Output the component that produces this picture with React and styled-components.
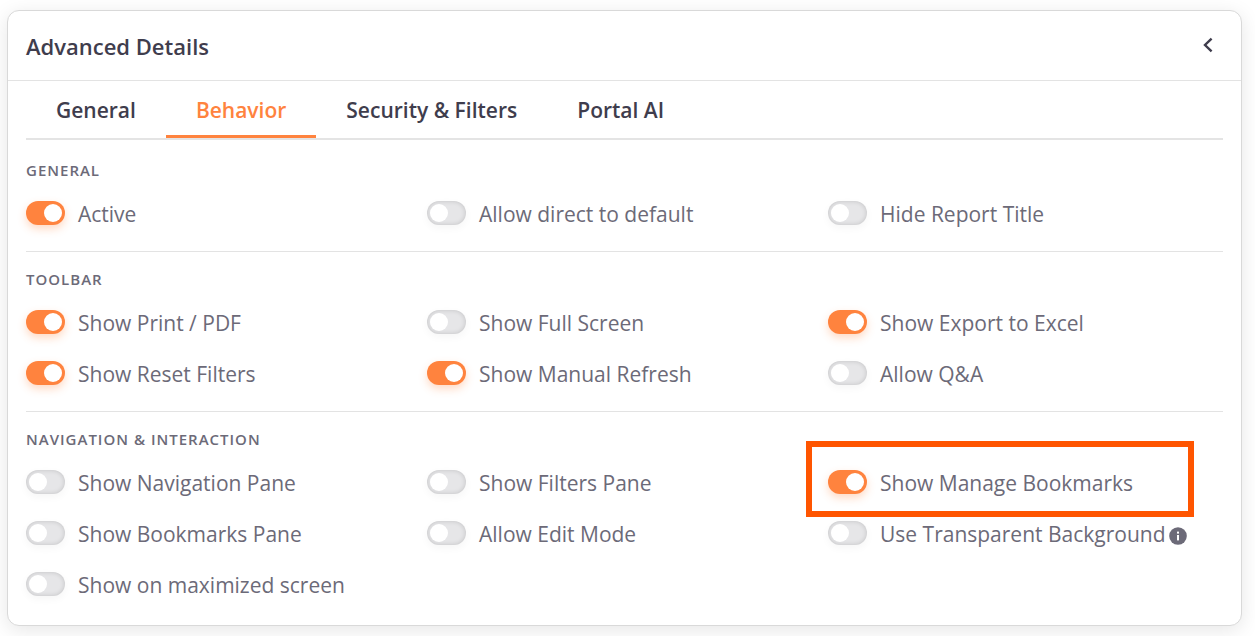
import React, { useState } from "react";
import styled, { createGlobalStyle } from "styled-components";

const GlobalStyle = createGlobalStyle`
  *, *::before, *::after { box-sizing: border-box; }
  body {
    margin: 0;
    background: #fff;
    color: #3f3d4d;
    font-family: "Open Sans", "Noto Sans", sans-serif;
    font-size: 21px;
  }
`;

const Page = styled.main`
  padding: 10px 13px 10px 7px;
`;

const Card = styled.section`
  background: #fff;
  border: 1px solid #d9d9d9;
  border-radius: 12px;
  box-shadow: 0 4px 20px rgba(0, 0, 0, 0.1);
`;

const CardHeader = styled.header`
  display: flex;
  align-items: center;
  justify-content: space-between;
  height: 70px;
  padding: 0 18px;
  border-bottom: 1px solid #e3e3e3;
`;

const Title = styled.h2`
  margin: 0;
  font-size: 22px;
  font-weight: 600;
  line-height: 32px;
`;

const CollapseButton = styled.button`
  display: flex;
  align-items: center;
  justify-content: center;
  width: 30px;
  height: 32px;
  padding: 0 0 2px;
  border: 0;
  background: none;
  color: #3f3d4d;
  cursor: pointer;
`;

const CardBody = styled.div`
  padding: 0 18px 15px;
`;

const TabList = styled.div`
  display: flex;
  border-bottom: 2px solid #e4e4e4;
`;

const Tab = styled.button`
  height: 57px;
  padding: 4px 30px 0;
  border: 0;
  border-bottom: 3px solid ${(p) => (p.$active ? "#ff833e" : "transparent")};
  background: none;
  color: ${(p) => (p.$active ? "#ff833e" : "#3f3d4d")};
  font-family: inherit;
  font-size: 21px;
  font-weight: 600;
  white-space: nowrap;
  cursor: pointer;
`;

const Group = styled.section`
  padding: 17px 0 12px;
  border-top: 1px solid #e3e3e3;

  &:first-of-type {
    padding-top: 20px;
    border-top: 0;
  }

  &:last-of-type {
    padding-bottom: 0;
  }
`;

const GroupTitle = styled.h3`
  margin: 0 0 8px;
  color: #6c6a78;
  font-size: 15px;
  font-weight: 600;
  line-height: 20px;
  letter-spacing: 1px;
  text-transform: uppercase;
`;

const OptionGrid = styled.div`
  display: grid;
  grid-template-columns: repeat(3, minmax(0, 1fr));
  column-gap: 6px;
`;

const Option = styled.div`
  position: relative;
  display: flex;
  align-items: center;
  height: 51px;
`;

const OptionLabel = styled.label`
  display: flex;
  align-items: center;
  gap: 13px;
  color: #6c6a78;
  line-height: 30px;
  white-space: nowrap;
  cursor: pointer;
`;

const Switch = styled.input`
  appearance: none;
  display: flex;
  align-items: center;
  flex: none;
  width: 39px;
  height: 24px;
  margin: 0 0 2px;
  padding: 0 3px;
  border-radius: 12px;
  background: #e6e6e8;
  box-shadow: inset 0 0 5px rgba(0, 0, 0, 0.16), 0 3px 8px rgba(0, 0, 0, 0.04);
  cursor: pointer;

  &::before {
    content: "";
    width: 18px;
    height: 18px;
    border-radius: 50%;
    background: #fff;
  }

  &:checked {
    justify-content: flex-end;
    background: #ff833e;
    box-shadow: 0 4px 8px rgba(255, 131, 62, 0.3);
  }
`;

const InfoButton = styled.button`
  display: flex;
  margin: 4px 0 0 3px;
  padding: 0;
  border: 0;
  background: none;
  cursor: pointer;
`;

const Highlight = styled.div`
  position: absolute;
  inset: -16px 29px -9px -22px;
  border: 6px solid #ff5500;
  pointer-events: none;
`;

const TABS = ["General", "Behavior", "Security & Filters", "Portal AI"];

const GROUPS = [
  {
    title: "General",
    options: [
      { label: "Active", on: true },
      { label: "Allow direct to default" },
      { label: "Hide Report Title" },
    ],
  },
  {
    title: "Toolbar",
    options: [
      { label: "Show Print / PDF", on: true },
      { label: "Show Full Screen" },
      { label: "Show Export to Excel", on: true },
      { label: "Show Reset Filters", on: true },
      { label: "Show Manual Refresh", on: true },
      { label: "Allow Q&A" },
    ],
  },
  {
    title: "Navigation & Interaction",
    options: [
      { label: "Show Navigation Pane" },
      { label: "Show Filters Pane" },
      { label: "Show Manage Bookmarks", on: true, highlight: true },
      { label: "Show Bookmarks Pane" },
      { label: "Allow Edit Mode" },
      { label: "Use Transparent Background", info: true },
      { label: "Show on maximized screen" },
    ],
  },
];

function ChevronIcon() {
  return (
    <svg width="14" height="18" viewBox="0 0 14 18" fill="none" aria-hidden="true">
      <path d="M10.6 2.6 L4 9 L10.6 15.4" stroke="currentColor" strokeWidth="2.4" />
    </svg>
  );
}

function InfoIcon() {
  return (
    <svg width="18" height="18" viewBox="0 0 18 18" aria-hidden="true">
      <circle cx="9" cy="9" r="8.8" fill="#6c6a78" />
      <rect x="8" y="4.6" width="2" height="2" fill="#fff" />
      <rect x="8" y="8" width="2" height="5.4" fill="#fff" />
    </svg>
  );
}

export default function App() {
  const [tab, setTab] = useState("Behavior");

  return (
    <>
      <GlobalStyle />
      <Page>
        <Card>
          <CardHeader>
            <Title>Advanced Details</Title>
            <CollapseButton type="button" aria-label="Collapse">
              <ChevronIcon />
            </CollapseButton>
          </CardHeader>
          <CardBody>
            <TabList role="tablist">
              {TABS.map((name) => (
                <Tab
                  key={name}
                  type="button"
                  role="tab"
                  aria-selected={name === tab}
                  $active={name === tab}
                  onClick={() => setTab(name)}
                >
                  {name}
                </Tab>
              ))}
            </TabList>
            {GROUPS.map((group) => (
              <Group key={group.title}>
                <GroupTitle>{group.title}</GroupTitle>
                <OptionGrid>
                  {group.options.map((option) => (
                    <Option key={option.label}>
                      <OptionLabel>
                        <Switch type="checkbox" role="switch" defaultChecked={option.on} />
                        {option.label}
                      </OptionLabel>
                      {option.info && (
                        <InfoButton type="button" aria-label="More information">
                          <InfoIcon />
                        </InfoButton>
                      )}
                      {option.highlight && <Highlight />}
                    </Option>
                  ))}
                </OptionGrid>
              </Group>
            ))}
          </CardBody>
        </Card>
      </Page>
    </>
  );
}
